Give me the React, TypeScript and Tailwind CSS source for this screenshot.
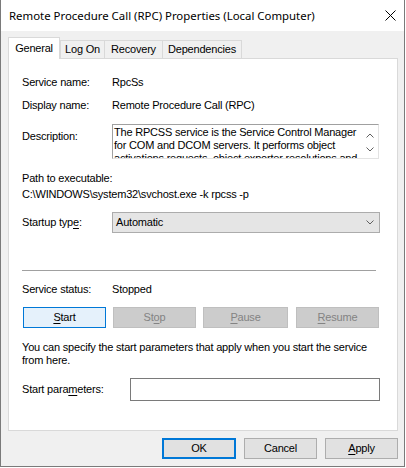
import React from 'react';

const U = ({ children }: { children: React.ReactNode }) => (
  <span className="underline underline-offset-[2px] decoration-1">{children}</span>
);

const Chevron = ({ up = false }: { up?: boolean }) => (
  <svg width="8" height="5" viewBox="0 0 8 5" className="block">
    <path
      d={up ? 'M0.5 4.5L4 1L7.5 4.5' : 'M0.5 0.5L4 4L7.5 0.5'}
      fill="none"
      stroke="#606060"
      strokeWidth="1"
    />
  </svg>
);

const App: React.FC = () => {
  const tabs = [
    { label: 'Log On', w: 'w-[45px] border-l' },
    { label: 'Recovery', w: 'w-[58px]' },
    { label: 'Dependencies', w: 'w-[79px]' },
  ];

  return (
    <div className="w-[406px] h-[468px] bg-white font-['Liberation_Sans',Arial,sans-serif] text-[11px] leading-[13px] tracking-[-0.2px] text-black">
      <div className="w-[405px] h-[467px] flex flex-col bg-[#f0f0f0] border-x border-b border-[#7a7a7a]">
        {/* Title bar */}
        <div className="h-[31px] shrink-0 bg-white flex items-center justify-between pl-[8px] pr-[8px]">
          <span className="font-['Noto_Sans',sans-serif] text-[11.4px] leading-[16px] tracking-normal">
            Remote Procedure Call (RPC) Properties (Local Computer)
          </span>
          <svg width="11" height="11" viewBox="0 0 11 11">
            <path d="M0.5 0.5L10.5 10.5M10.5 0.5L0.5 10.5" stroke="#000" strokeWidth="1" />
          </svg>
        </div>

        {/* Tabs */}
        <div className="mt-[6px] h-[21px] ml-[7px] flex items-end relative z-10">
          <div className="w-[52px] h-[22px] -mb-[1px] bg-white border border-b-0 border-[#d9d9d9] flex items-center justify-center">
            General
          </div>
          {tabs.map((t) => (
            <div
              key={t.label}
              className={`${t.w} h-[18px] border-t border-r border-[#d9d9d9] bg-[#f0f0f0] flex items-center justify-center`}
            >
              {t.label}
            </div>
          ))}
        </div>

        {/* Panel */}
        <div className="ml-[7px] mr-[6px] h-[373px] shrink-0 bg-white border border-[#d9d9d9] pl-[13px] flex flex-col">
          <div className="mt-[17px] flex h-[13px]">
            <span className="w-[90px]">Service name:</span>
            <span>RpcSs</span>
          </div>
          <div className="mt-[10px] flex h-[13px]">
            <span className="w-[90px]">Display name:</span>
            <span>Remote Procedure Call (RPC)</span>
          </div>
          <div className="mt-[12px] flex h-[35px]">
            <span className="w-[90px] mt-[6px]">Description:</span>
            <div className="w-[267px] h-[35px] flex border border-[#a0a0a0] border-r-[#e3e3e3] border-b-[#e3e3e3] bg-white overflow-hidden">
              <div className="flex-1 pl-[1px] pt-[1px] whitespace-nowrap overflow-hidden">
                The RPCSS service is the Service Control Manager
                <br />
                for COM and DCOM servers. It performs object
                <br />
                activations requests, object exporter resolutions and
              </div>
              <div className="w-[16px] shrink-0 flex flex-col items-center pt-[8px] gap-[9px]">
                <Chevron up />
                <Chevron />
              </div>
            </div>
          </div>
          <div className="mt-[13px] h-[13px]">Path to executable:</div>
          <div className="mt-[3px] h-[13px]">C:\WINDOWS\system32\svchost.exe -k rpcss -p</div>
          <div className="mt-[11px] flex items-center h-[21px]">
            <span className="w-[90px]">
              Startup typ<U>e</U>:
            </span>
            <div className="w-[268px] h-[21px] bg-[#e5e5e5] border border-[#acacac] flex items-center justify-between pl-[3px] pr-[5px]">
              <span>Automatic</span>
              <Chevron />
            </div>
          </div>
          <div className="mt-[37px] w-[354px] h-px bg-[#a0a0a0]" />
          <div className="mt-[12px] flex h-[13px]">
            <span className="w-[90px]">Service status:</span>
            <span>Stopped</span>
          </div>
          <div className="mt-[11px] ml-[1px] flex gap-[7px] h-[21px]">
            <button className="w-[83px] h-[21px] bg-[#e5f1fb] border border-[#0078d7]">
              <U>S</U>tart
            </button>
            <button className="w-[83px] h-[21px] bg-[#cccccc] border border-[#bfbfbf] text-[#838383]">
              St<U>o</U>p
            </button>
            <button className="w-[85px] h-[21px] bg-[#cccccc] border border-[#bfbfbf] text-[#838383]">
              <U>P</U>ause
            </button>
            <button className="ml-[1px] w-[83px] h-[21px] bg-[#cccccc] border border-[#bfbfbf] text-[#838383]">
              <U>R</U>esume
            </button>
          </div>
          <p className="mt-[13px] whitespace-nowrap">
            You can specify the start parameters that apply when you start the service
            <br />
            from here.
          </p>
          <div className="mt-[11px] flex items-center h-[23px]">
            <span className="w-[108px]">
              Start para<U>m</U>eters:
            </span>
            <div className="w-[250px] h-[23px] bg-white border border-[#7a7a7a]" />
          </div>
        </div>

        {/* Dialog buttons */}
        <div className="mt-[7px] mr-[6px] flex justify-end gap-[8px]">
          <button className="w-[74px] h-[21px] bg-[#e1e1e1] border-2 border-[#0078d7]">OK</button>
          <button className="w-[73px] h-[21px] bg-[#e1e1e1] border border-[#adadad]">Cancel</button>
          <button className="w-[73px] h-[21px] bg-[#e1e1e1] border border-[#adadad]">
            <U>A</U>pply
          </button>
        </div>
      </div>
    </div>
  );
};

export default App;
